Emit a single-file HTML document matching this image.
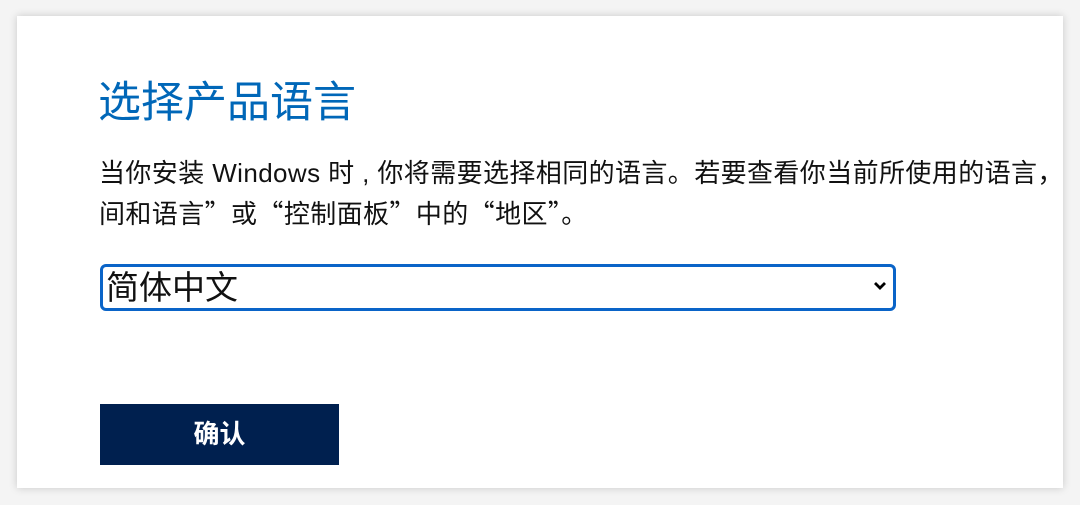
<!DOCTYPE html>
<html><head><meta charset="utf-8"><style>
html,body{margin:0;padding:0;width:1080px;height:505px;background:#f4f4f4;overflow:hidden}
.card{position:absolute;left:17px;top:16px;width:1046px;height:472px;background:#fff;box-shadow:0 0 8px rgba(0,0,0,.18);overflow:hidden;font-family:"Liberation Sans","Noto Sans CJK SC",sans-serif}
h1{position:absolute;left:81px;top:58px;margin:0;font-size:43px;font-weight:400;color:#0067b8;line-height:58px;white-space:nowrap}
p{position:absolute;left:82px;top:137px;margin:0;font-size:26px;line-height:40px;color:#111;white-space:nowrap;letter-spacing:0.4px}
.q{font-family:"Noto Sans CJK SC",sans-serif}
.sel{position:absolute;left:83px;top:248px;width:790px;height:41px;border:3px solid #0a64c8;border-radius:6px;box-sizing:content-box}
.sel span{position:absolute;left:3px;top:0;font-size:33px;line-height:41px;color:#111}
.sel svg{position:absolute;right:6px;top:14px}
.btn{position:absolute;left:83px;top:388px;width:239px;height:61px;background:#00204f;color:#fff;font-size:26px;font-weight:700;text-align:center;line-height:61px}
</style></head><body>
<div class="card">
<h1>选择产品语言</h1>
<p>当你安装 Windows 时 , 你将需要选择相同的语言。若要查看你当前所使用的语言，请转到电脑设置中的“时<br>间和语言<span class="q">”</span>或<span class="q">“</span>控制面板<span class="q">”</span>中的<span class="q">“</span>地区<span class="q">”</span>。</p>
<div class="sel"><span>简体中文</span><svg width="14" height="10" viewBox="0 0 14 10"><path d="M2 2 L7 7 L12 2" stroke="#000" stroke-width="2.8" fill="none"/></svg></div>
<div class="btn">确认</div>
</div>
</body></html>
